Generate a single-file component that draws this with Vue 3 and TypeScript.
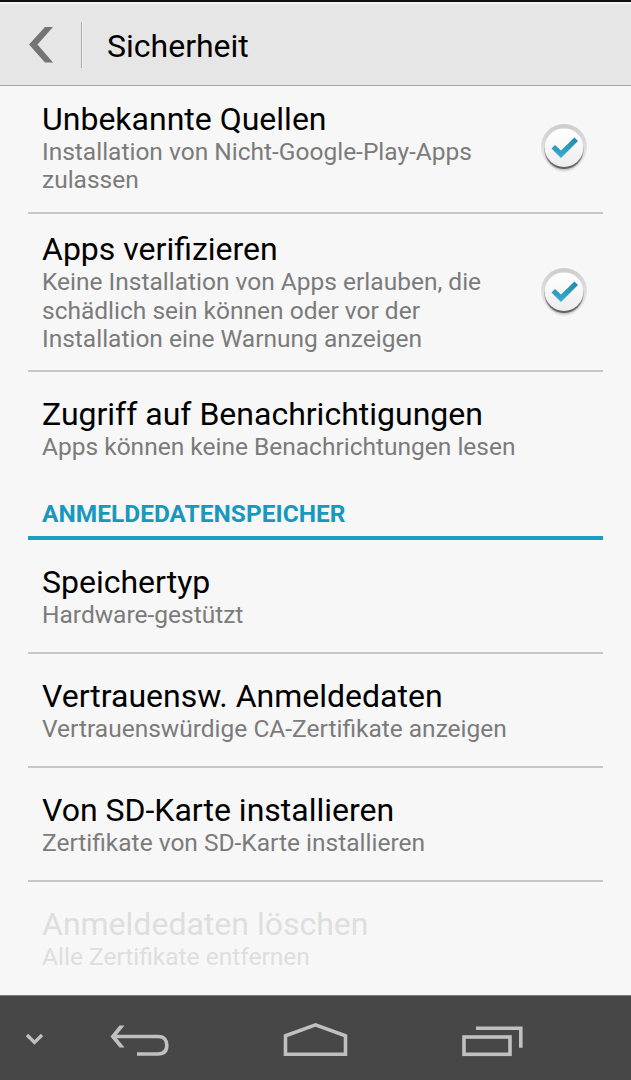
<script setup lang="ts">
interface Line { text: string; spacing: number }
interface Entry {
  title: Line
  summary: Line[]
  kind: string
  checked?: boolean
}

const line = (text: string, spacing = 0): Line => ({ text, spacing })

const general: Entry[] = [
  {
    title: line('Unbekannte Quellen'),
    summary: [line('Installation von Nicht-Google-Play-Apps'), line('zulassen')],
    kind: 'first',
    checked: true,
  },
  {
    title: line('Apps verifizieren'),
    summary: [
      line('Keine Installation von Apps erlauben, die'),
      line('schädlich sein können oder vor der'),
      line('Installation eine Warnung anzeigen'),
    ],
    kind: 'tall',
    checked: true,
  },
  {
    title: line('Zugriff auf Benachrichtigungen'),
    summary: [line('Apps können keine Benachrichtungen lesen')],
    kind: 'last',
  },
]

const credentials: Entry[] = [
  { title: line('Speichertyp'), summary: [line('Hardware-gestützt')], kind: 'normal' },
  { title: line('Vertrauensw. Anmeldedaten'), summary: [line('Vertrauenswürdige CA-Zertifikate anzeigen')], kind: 'normal' },
  { title: line('Von SD-Karte installieren'), summary: [line('Zertifikate von SD-Karte installieren')], kind: 'normal' },
  { title: line('Anmeldedaten löschen'), summary: [line('Alle Zertifikate entfernen')], kind: 'last disabled' },
]

const groups = [
  { heading: '', entries: general },
  { heading: 'ANMELDEDATENSPEICHER', entries: credentials },
]
</script>

<template>
  <div class="screen">
    <header class="bar">
      <svg class="back" width="26" height="38" viewBox="0 0 26 38">
        <path d="M17 1H25L9.500 18.500L25 36.500H17L1 18.500Z" fill="#747474" />
      </svg>
      <span class="rule"></span>
      <h1>Sicherheit</h1>
    </header>

    <main>
      <section v-for="g in groups" :key="g.heading">
        <h2 v-if="g.heading">{{ g.heading }}</h2>
        <div v-for="e in g.entries" :key="e.title.text" class="row" :class="e.kind">
          <div class="copy">
            <div class="title"><span :style="{ letterSpacing: e.title.spacing + 'px' }">{{ e.title.text }}</span></div>
            <div v-for="s in e.summary" :key="s.text" class="summary">
              <span :style="{ letterSpacing: s.spacing + 'px' }">{{ s.text }}</span>
            </div>
          </div>
          <svg v-if="e.checked" class="check" width="54" height="54" viewBox="0 0 54 54">
            <defs>
              <linearGradient id="ring" x1="0" y1="0" x2="0" y2="1">
                <stop offset="0" stop-color="#cccccc" />
                <stop offset="0.5" stop-color="#dedede" />
                <stop offset="1" stop-color="#f2f2f2" />
              </linearGradient>
              <linearGradient id="edge" x1="0" y1="0" x2="0" y2="1">
                <stop offset="0.3" stop-color="#c4c4c4" />
                <stop offset="1" stop-color="#5c5c5c" />
              </linearGradient>
              <linearGradient id="face" x1="0" y1="0" x2="0" y2="1">
                <stop offset="0" stop-color="#ffffff" />
                <stop offset="1" stop-color="#ededed" />
              </linearGradient>
              <linearGradient id="tick" x1="0" y1="0" x2="0" y2="1">
                <stop offset="0" stop-color="#2089ab" />
                <stop offset="1" stop-color="#36aed2" />
              </linearGradient>
              <filter id="soft" x="-30%" y="-30%" width="160%" height="160%">
                <feGaussianBlur stdDeviation="1.8" />
              </filter>
            </defs>
            <circle cx="27" cy="26" r="23" fill="url(#ring)" />
            <circle cx="27" cy="31" r="18" fill="#777777" opacity="0.6" filter="url(#soft)" />
            <circle cx="27" cy="28.300" r="19.700" fill="url(#edge)" />
            <circle cx="27" cy="26.700" r="19.300" fill="url(#face)" />
            <path d="M14.500 27.500L18 24L24 29.500L37.500 16.500L41 20L24 37Z" fill="url(#tick)" />
          </svg>
        </div>
      </section>
    </main>

    <nav>
      <svg width="631" height="85" viewBox="0 0 631 85" fill="none" stroke="#bfc0bf" stroke-width="4">
        <path d="M27 39L34.500 46.500L42 39" stroke-width="3.300" />
        <path d="M114 40.500H158.500C164 40.500 166.800 44 166.800 49.300C166.800 55 163.500 58 158 58H137" stroke-width="3.600" />
        <path d="M119.500 29.500H124.500L115.500 40.500L124.500 51.500H119.500L110.500 40.500Z" fill="#bfc0bf" stroke="none" />
        <path d="M285.500 58.200V39.700L315.500 28.800L345.500 39.700V58.200Z" stroke-width="3.600" />
        <rect x="464" y="41" width="46" height="17.300" stroke-width="3.600" />
        <path d="M476 32.300H520.800V51.700" stroke-width="3.600" />
      </svg>
    </nav>
  </div>
</template>

<style>
body { background: #f7f7f7; }
</style>

<style scoped>
.screen {
  width: 631px;
  height: 1080px;
  display: flex;
  flex-direction: column;
  overflow: hidden;
  background: #f7f7f7;
  font-family: Roboto, "Liberation Sans", sans-serif;
  color: #000;
}
.bar {
  box-sizing: border-box;
  height: 86px;
  flex: none;
  display: flex;
  align-items: center;
  padding: 4px 0 0 28px;
  border-top: 2px solid #111;
  border-bottom: 1px solid #a6a6a6;
  background: #e6e6e6;
  box-shadow: inset 0 2px #f3f3f3;
}
.back { margin-top: -2px; }
.rule {
  width: 1px;
  height: 46px;
  margin: -2px 24px 0 27px;
  background: #aaa;
  border-right: 1px solid #f2f2f2;
}
h1 {
  margin: 0;
  font-size: 32px;
  font-weight: 400;
  line-height: 38px;
}
main { flex: 1; padding: 0 28px; }
.row {
  box-sizing: border-box;
  display: flex;
  align-items: center;
  justify-content: space-between;
  height: 114px;
  padding: 0 12px 0 14px;
  border-bottom: 2px solid #c6c6c6;
}
.first { height: 128px; align-items: flex-end; padding-bottom: 17px; }
.first .check { margin-bottom: 20px; }
.tall { height: 158px; }
.last { height: 112px; border-bottom: 0; }
.title {
  height: 38px;
  font-size: 32px;
  line-height: 38px;
  white-space: nowrap;
}
.summary {
  height: 28.600px;
  font-size: 24.500px;
  line-height: 28.600px;
  white-space: nowrap;
  color: #7b7b7b;
}
.disabled .title, .disabled .summary { color: #dedede; }
.check { flex: none; }
h2 {
  box-sizing: border-box;
  height: 56px;
  margin: 0;
  padding: 15px 14px 0;
  border-bottom: 4px solid #1d9dc3;
  font-size: 24.500px;
  font-weight: 700;
  line-height: 29px;
  color: #1798bd;
}
nav {
  flex: none;
  height: 84px;
  background: #474747;
  border-top: 1px solid #777;
}
nav svg { display: block; }
</style>
